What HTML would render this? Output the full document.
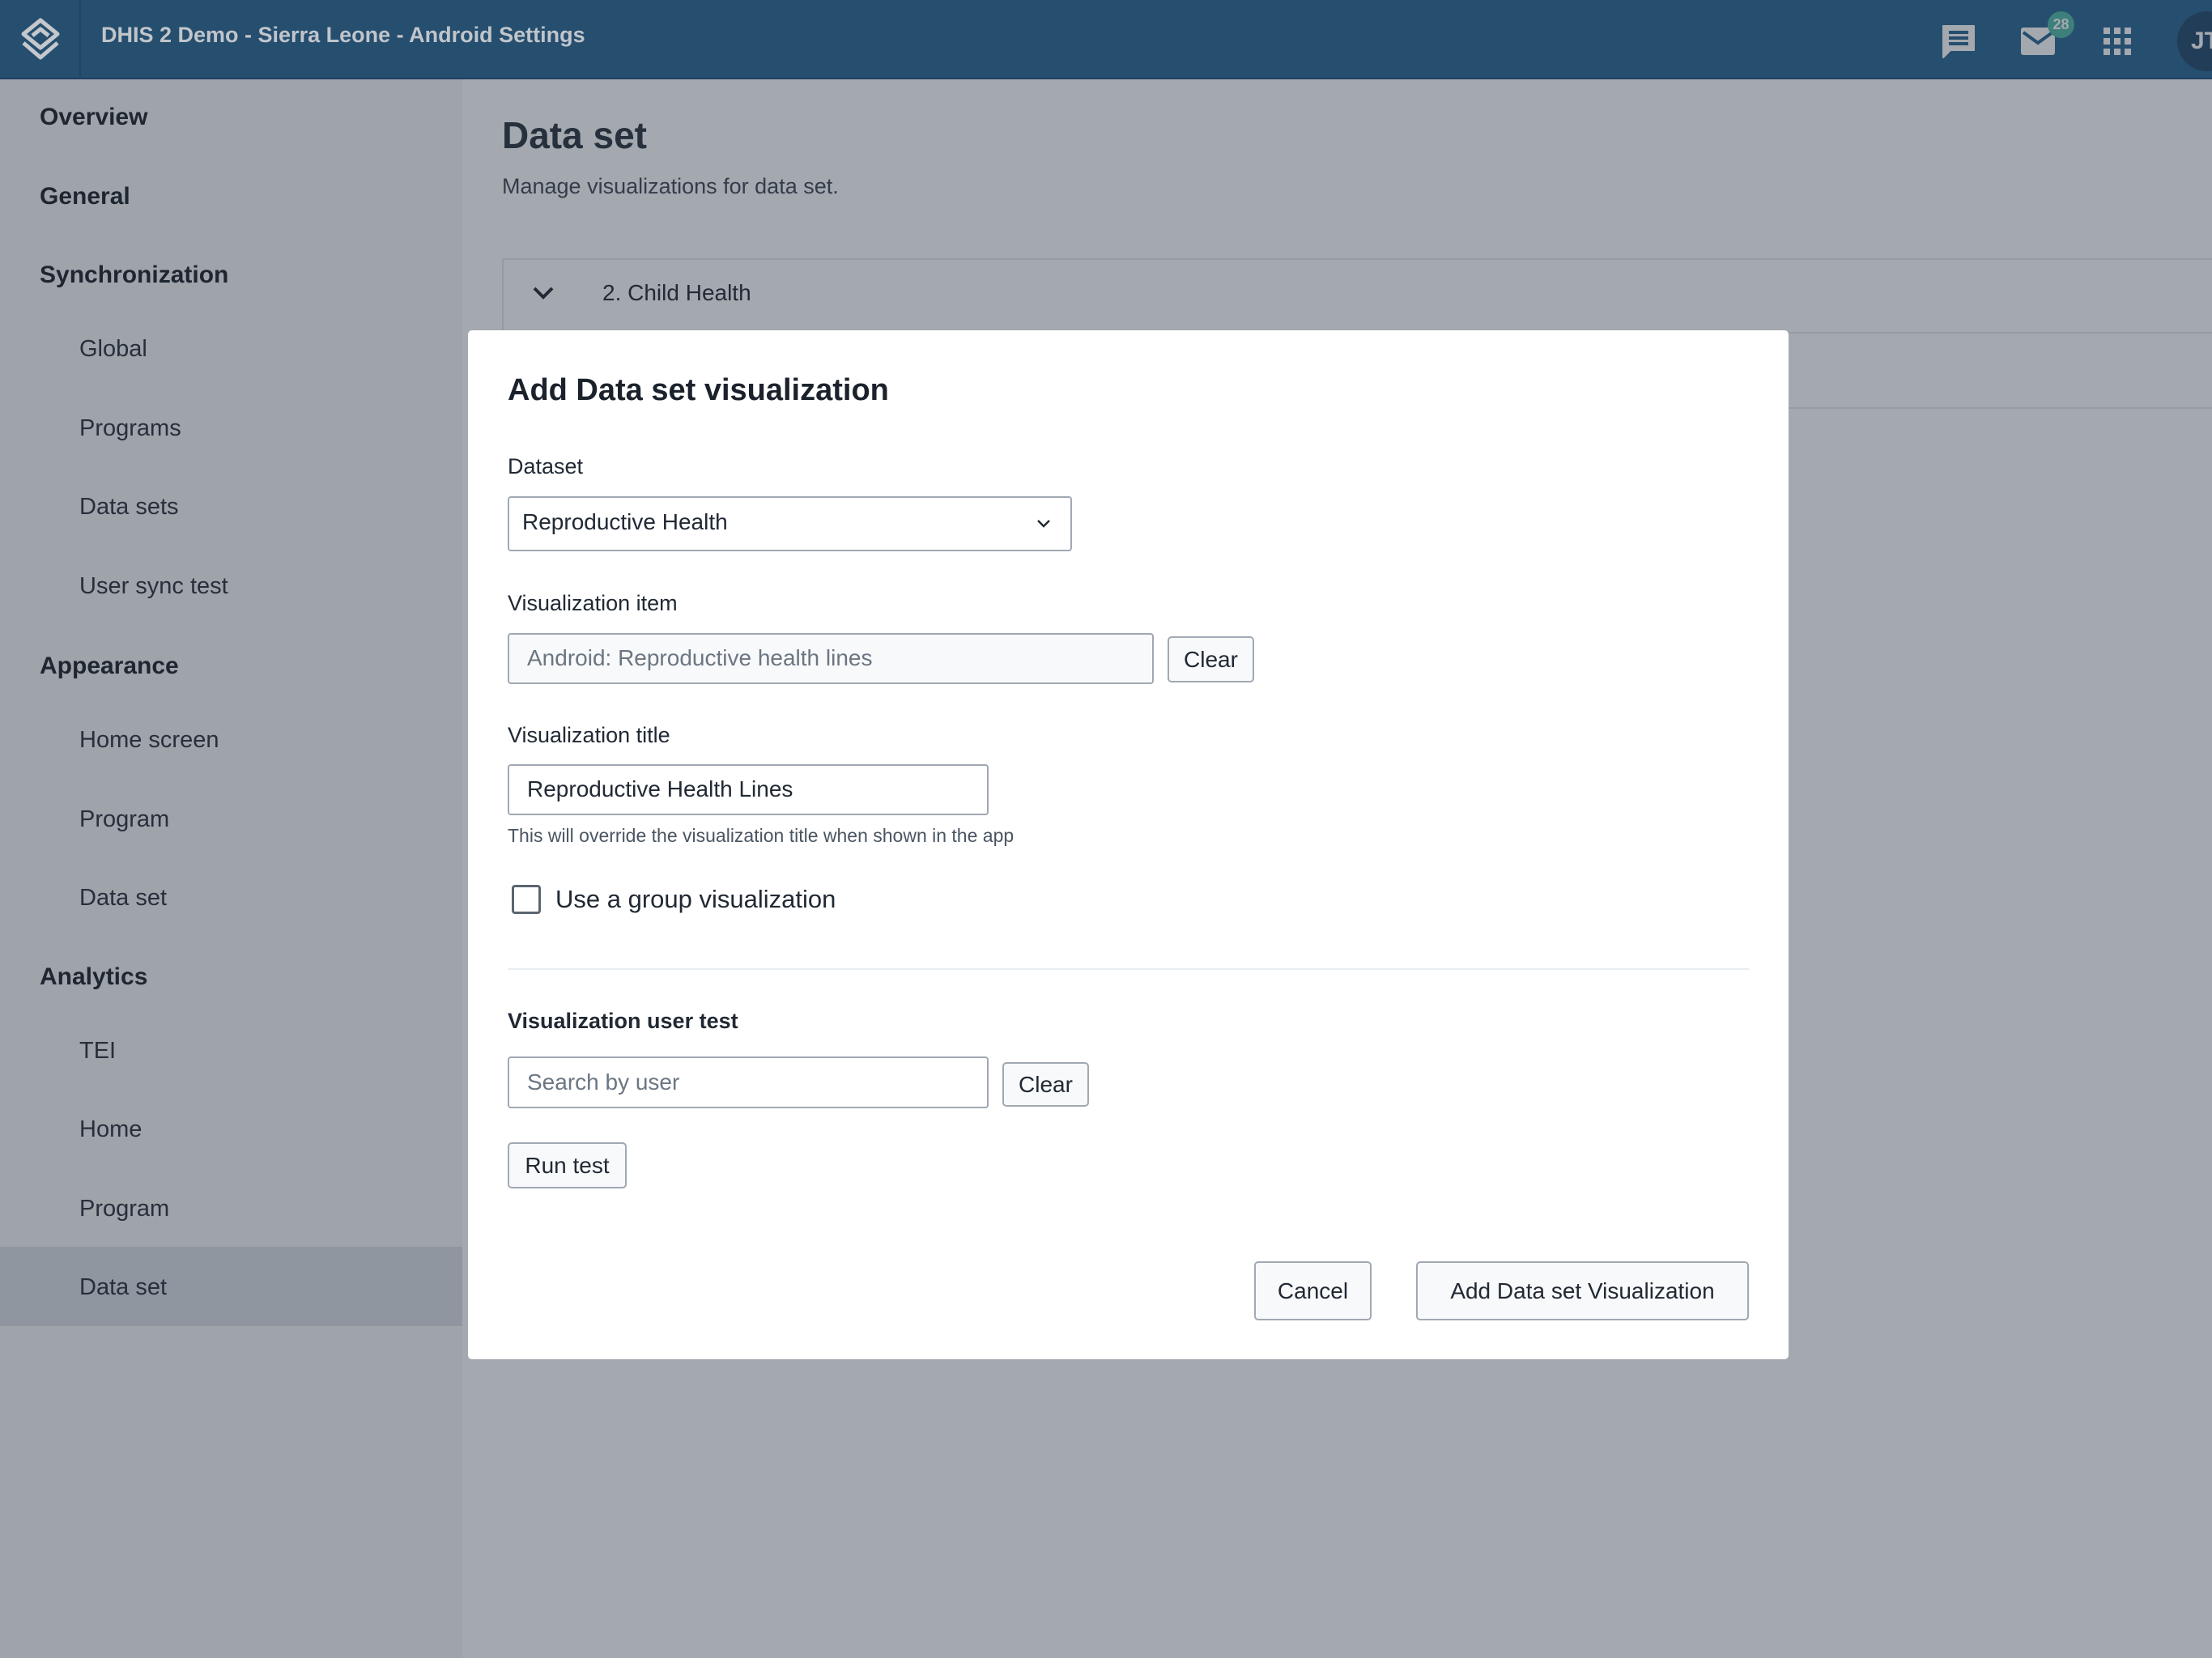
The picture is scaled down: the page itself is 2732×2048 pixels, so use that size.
<!DOCTYPE html>
<html><head><meta charset="utf-8"><style>
*{margin:0;padding:0;box-sizing:border-box}
body{width:2732px;height:2048px;overflow:hidden;background:#a4a8af;font-family:"Liberation Sans",sans-serif;position:relative}
.a{position:absolute;white-space:nowrap}
.top{left:0;top:0;width:2732px;height:98px;background:#264e6e;border-bottom:2px solid #1f4060}
.side{left:0;top:98px;width:571px;height:1950px;background:#9fa3aa}
.nav{font-size:30px;color:#1e2630;left:49px;font-weight:bold}
.sub{font-size:29px;color:#262f3a;left:98px}
.modal{left:578px;top:408px;width:1631px;height:1271px;background:#fff;border-radius:5px}
.lbl{font-size:27px;color:#212934;left:627px}
.box{border:2px solid #a0a8b3;border-radius:4px;background:#fff}
.btn{border:2px solid #a0a8b3;border-radius:5px;background:#f8f9fa;font-size:28px;color:#212934;display:flex;align-items:center;justify-content:center}
</style></head><body>
<div class="a top"></div>
<svg class="a" style="left:20px;top:20px" width="60" height="60" viewBox="0 0 60 60"><g fill="none" stroke="#c4c8cd" stroke-width="5" stroke-linejoin="round"><path d="M30 5 L51 22 L30 39 L9 22 Z"/><path d="M20 24 L30 16 L40 24"/><path d="M9 33 L30 51 L51 33"/></g></svg>
<div class="a" style="left:98px;top:0;width:2px;height:98px;background:#21455f"></div>
<div class="a" style="left:125px;top:28px;font-size:27px;color:#c0c5cb;font-weight:bold">DHIS 2 Demo - Sierra Leone - Android Settings</div>
<svg class="a" style="left:2397px;top:29px" width="44" height="44" viewBox="0 0 44 44"><path d="M3 3 H41 V33 H12 L3 42 Z" fill="#a4a8af" stroke="#a4a8af" stroke-width="2" stroke-linejoin="round"/><path d="M10 11 H34 M10 18 H34 M10 25 H34" stroke="#264e6e" stroke-width="4"/></svg>
<svg class="a" style="left:2496px;top:34px" width="44" height="36" viewBox="0 0 44 36"><rect x="0" y="0" width="42" height="34" rx="3" fill="#a4a8af"/><path d="M3 6 L21 19 L39 6" fill="none" stroke="#264e6e" stroke-width="4"/></svg>
<div class="a" style="left:2529px;top:14px;width:33px;height:33px;border-radius:50%;background:#3d7f7a;color:#a4a8af;font-size:18px;font-weight:bold;text-align:center;line-height:33px">28</div>
<svg class="a" style="left:2598px;top:34px" width="35" height="35"><g fill="#a4a8af"><rect x="0" y="0" width="8" height="8"/><rect x="13" y="0" width="8" height="8"/><rect x="26" y="0" width="8" height="8"/><rect x="0" y="13" width="8" height="8"/><rect x="13" y="13" width="8" height="8"/><rect x="26" y="13" width="8" height="8"/><rect x="0" y="26" width="8" height="8"/><rect x="13" y="26" width="8" height="8"/><rect x="26" y="26" width="8" height="8"/></g></svg>
<div class="a" style="left:2689px;top:14px;width:74px;height:74px;border-radius:50%;background:#223d57;color:#a4a8af;font-size:30px;font-weight:bold;line-height:74px;padding-left:17px">JT</div>

<div class="a side"></div>
<div class="a" style="left:0;top:1540px;width:571px;height:98px;background:#8f96a0"></div>
<div class="a nav" style="top:128px">Overview</div>
<div class="a nav" style="top:226px">General</div>
<div class="a nav" style="top:323px">Synchronization</div>
<div class="a sub" style="top:415px">Global</div>
<div class="a sub" style="top:513px">Programs</div>
<div class="a sub" style="top:610px">Data sets</div>
<div class="a sub" style="top:708px">User sync test</div>
<div class="a nav" style="top:806px">Appearance</div>
<div class="a sub" style="top:898px">Home screen</div>
<div class="a sub" style="top:996px">Program</div>
<div class="a sub" style="top:1093px">Data set</div>
<div class="a nav" style="top:1190px">Analytics</div>
<div class="a sub" style="top:1282px">TEI</div>
<div class="a sub" style="top:1379px">Home</div>
<div class="a sub" style="top:1477px">Program</div>
<div class="a sub" style="top:1574px">Data set</div>

<div class="a" style="left:620px;top:140px;font-size:46px;font-weight:bold;color:#27313d">Data set</div>
<div class="a" style="left:620px;top:215px;font-size:27px;color:#333d49">Manage visualizations for data set.</div>
<div class="a" style="left:620px;top:319px;width:2112px;height:186px;border:2px solid #979ca4;border-right:none"></div>
<div class="a" style="left:620px;top:410px;width:2112px;height:2px;background:#979ca4"></div>
<svg class="a" style="left:657px;top:352px" width="28" height="20"><path d="M3 4 L14 15 L25 4" fill="none" stroke="#222a35" stroke-width="4"/></svg>
<div class="a" style="left:744px;top:346px;font-size:28px;color:#222a35">2. Child Health</div>

<div class="a modal"></div>
<div class="a" style="left:627px;top:461px;font-size:38px;color:#1b222b;font-weight:bold">Add Data set visualization</div>
<div class="a lbl" style="top:561px">Dataset</div>
<div class="a box" style="left:627px;top:613px;width:697px;height:68px"></div>
<div class="a" style="left:645px;top:629px;font-size:28px;color:#212934">Reproductive Health</div>
<svg class="a" style="left:1280px;top:640px" width="18" height="14"><path d="M2 3 L9 10 L16 3" fill="none" stroke="#212934" stroke-width="2.5"/></svg>
<div class="a lbl" style="top:730px">Visualization item</div>
<div class="a box" style="left:627px;top:782px;width:798px;height:63px;background:#f8f9fa"></div>
<div class="a" style="left:651px;top:797px;font-size:28px;color:#6b7682">Android: Reproductive health lines</div>
<div class="a btn" style="left:1442px;top:786px;width:107px;height:57px">Clear</div>
<div class="a lbl" style="top:893px">Visualization title</div>
<div class="a box" style="left:627px;top:944px;width:594px;height:63px"></div>
<div class="a" style="left:651px;top:959px;font-size:28px;color:#212934">Reproductive Health Lines</div>
<div class="a" style="left:627px;top:1019px;font-size:23px;color:#4a5562">This will override the visualization title when shown in the app</div>
<div class="a" style="left:632px;top:1093px;width:36px;height:36px;border:3px solid #5b6572;border-radius:4px"></div>
<div class="a" style="left:686px;top:1093px;font-size:31px;color:#212934">Use a group visualization</div>
<div class="a" style="left:627px;top:1196px;width:1533px;height:2px;background:#e8edf2"></div>
<div class="a lbl" style="top:1246px;font-weight:bold;font-size:27px">Visualization user test</div>
<div class="a box" style="left:627px;top:1305px;width:594px;height:64px"></div>
<div class="a" style="left:651px;top:1321px;font-size:28px;color:#6b7682">Search by user</div>
<div class="a btn" style="left:1238px;top:1312px;width:107px;height:55px">Clear</div>
<div class="a btn" style="left:627px;top:1411px;width:147px;height:57px">Run test</div>
<div class="a btn" style="left:1549px;top:1558px;width:145px;height:73px">Cancel</div>
<div class="a btn" style="left:1749px;top:1558px;width:411px;height:73px">Add Data set Visualization</div>
</body></html>
